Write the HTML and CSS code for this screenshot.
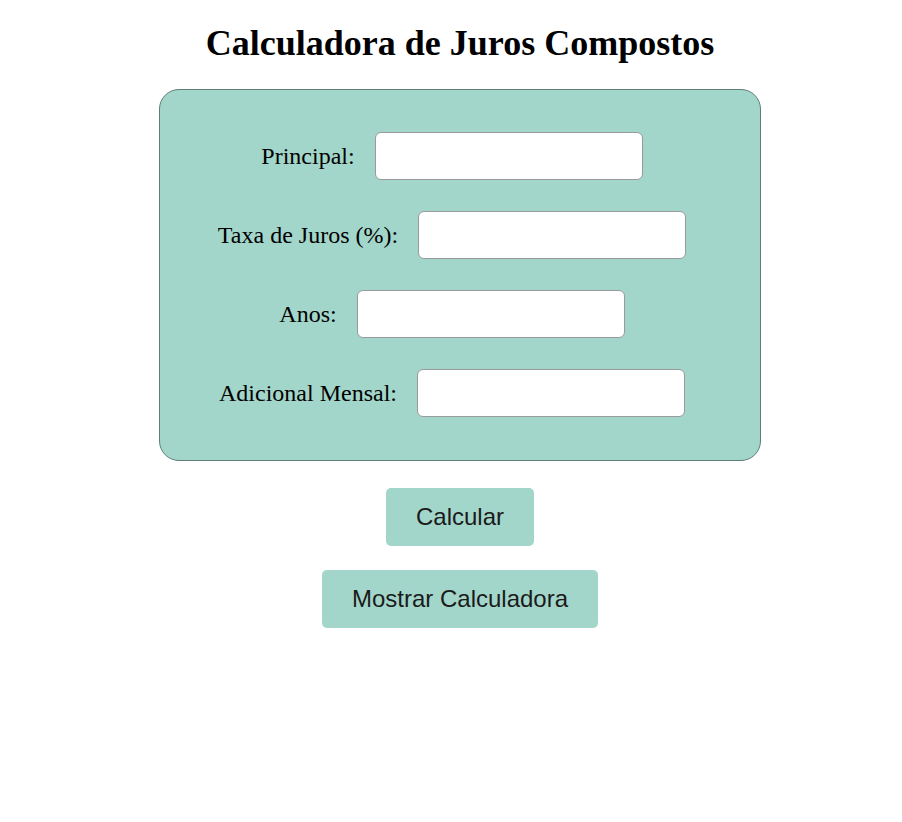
FILE: index.html
```html
<!DOCTYPE html>
<html lang="pt">
<head>
<meta charset="utf-8">
<title>Calculadora de Juros Compostos</title>
<link rel="stylesheet" href="styles.css">
</head>
<body>
<main class="page">
  <h1 class="title">Calculadora de Juros Compostos</h1>
  <form class="card">
    <div class="row">
      <label class="label" for="principal">Principal:</label>
      <input class="field" id="principal" type="text">
    </div>
    <div class="row">
      <label class="label" for="taxa">Taxa de Juros (%):</label>
      <input class="field" id="taxa" type="text">
    </div>
    <div class="row">
      <label class="label" for="anos">Anos:</label>
      <input class="field" id="anos" type="text">
    </div>
    <div class="row">
      <label class="label" for="adicional">Adicional Mensal:</label>
      <input class="field" id="adicional" type="text">
    </div>
  </form>
  <div class="actions">
    <button class="btn" type="button">Calcular</button>
    <button class="btn" type="button">Mostrar Calculadora</button>
  </div>
</main>
</body>
</html>
```
FILE: styles.css
```css
html, body {
  margin: 0;
  padding: 0;
  background: #ffffff;
}
body {
  font-family: "Liberation Serif", "Times New Roman", serif;
  color: #000;
}
.page {
  padding: 22px 0 0 18px;
  display: flex;
  flex-direction: column;
  align-items: center;
}
.title {
  margin: 0 0 25px;
  font-size: 36px;
  font-weight: bold;
  line-height: normal;
  text-align: center;
}
.card {
  box-sizing: border-box;
  width: 602px;
  background: #a3d6ca;
  border: 1px solid #5e7f77;
  border-radius: 20px;
  padding: 42px 0 43px;
  display: flex;
  flex-direction: column;
  gap: 31px;
}
.row {
  display: flex;
  align-items: center;
  justify-content: center;
  padding-right: 16px;
}
.label {
  font-size: 24px;
  margin-right: 20px;
}
.field {
  box-sizing: border-box;
  width: 268px;
  height: 48px;
  margin: 0;
  border: 1px solid #9a9a9a;
  border-radius: 6px;
  background: #fff;
  font-size: 20px;
  padding: 0 10px;
}
.actions {
  margin-top: 27px;
  display: flex;
  flex-direction: column;
  align-items: center;
  gap: 24px;
}
.btn {
  font-family: "Liberation Sans", Arial, sans-serif;
  font-size: 24px;
  line-height: normal;
  color: #1b1b1b;
  background: #a3d6ca;
  border: none;
  border-radius: 5px;
  padding: 15px 30px;
  margin: 0;
}
```
